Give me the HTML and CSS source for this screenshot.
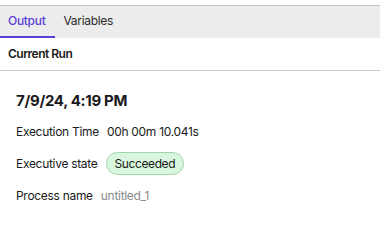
FILE: index.html
```html
<!DOCTYPE html>
<html>
<head>
<meta charset="utf-8">
<link rel="stylesheet" href="styles.css">
</head>
<body>
<div class="panel">
  <div class="tabs">
    <div class="tab active">Output</div>
    <div class="tab">Variables</div>
  </div>
  <div class="section-head">Current Run</div>
  <div class="content">
    <div class="date">7/9/24, 4:19 PM</div>
    <div class="row"><span class="label">Execution Time</span><span class="value">00h 00m 10.041s</span></div>
    <div class="row"><span class="label">Executive state</span><span class="pill">Succeeded</span></div>
    <div class="row"><span class="label">Process name</span><span class="muted">untitled_1</span></div>
  </div>
</div>
</body>
</html>
```
FILE: styles.css
```css
html, body {
  margin: 0;
  padding: 0;
  background: #ffffff;
  font-family: Inter, "Liberation Sans", sans-serif;
  color: #1a1a1a;
  letter-spacing: -0.3px;
}
.panel {
  margin-top: 5px;
  border-top: 1px solid #c2c2c2;
}
.tabs {
  display: flex;
  background: #ececec;
  height: 32px;
}
.tab {
  padding: 0 8px;
  font-size: 12px;
  line-height: 30px;
  border-bottom: 2px solid transparent;
  color: #2a2a2a;
}
.tab.active {
  color: #5a3fd6;
  border-bottom-color: #5a3fd6;
  font-weight: 500;
  padding-right: 10px;
}
.section-head {
  height: 32px;
  line-height: 31px;
  padding-left: 8px;
  font-size: 12px;
  font-weight: 600;
  letter-spacing: -0.5px;
  border-bottom: 1px solid #c8c8c8;
}
.content {
  padding: 19px 16px;
  display: flex;
  flex-direction: column;
  gap: 9px;
}
.date {
  font-size: 15px;
  font-weight: 700;
  line-height: 22px;
  letter-spacing: -0.3px;
  margin-bottom: -1px;
}
.row {
  display: flex;
  align-items: center;
  gap: 8px;
  height: 23px;
  font-size: 12px;
}
.pill {
  box-sizing: border-box;
  background: #d8f7de;
  border: 1px solid #a2d4ad;
  border-radius: 12px;
  padding: 0 8px;
  height: 23px;
  line-height: 21px;
  letter-spacing: -0.4px;
}
.muted {
  color: #8a8a8a;
}
```
